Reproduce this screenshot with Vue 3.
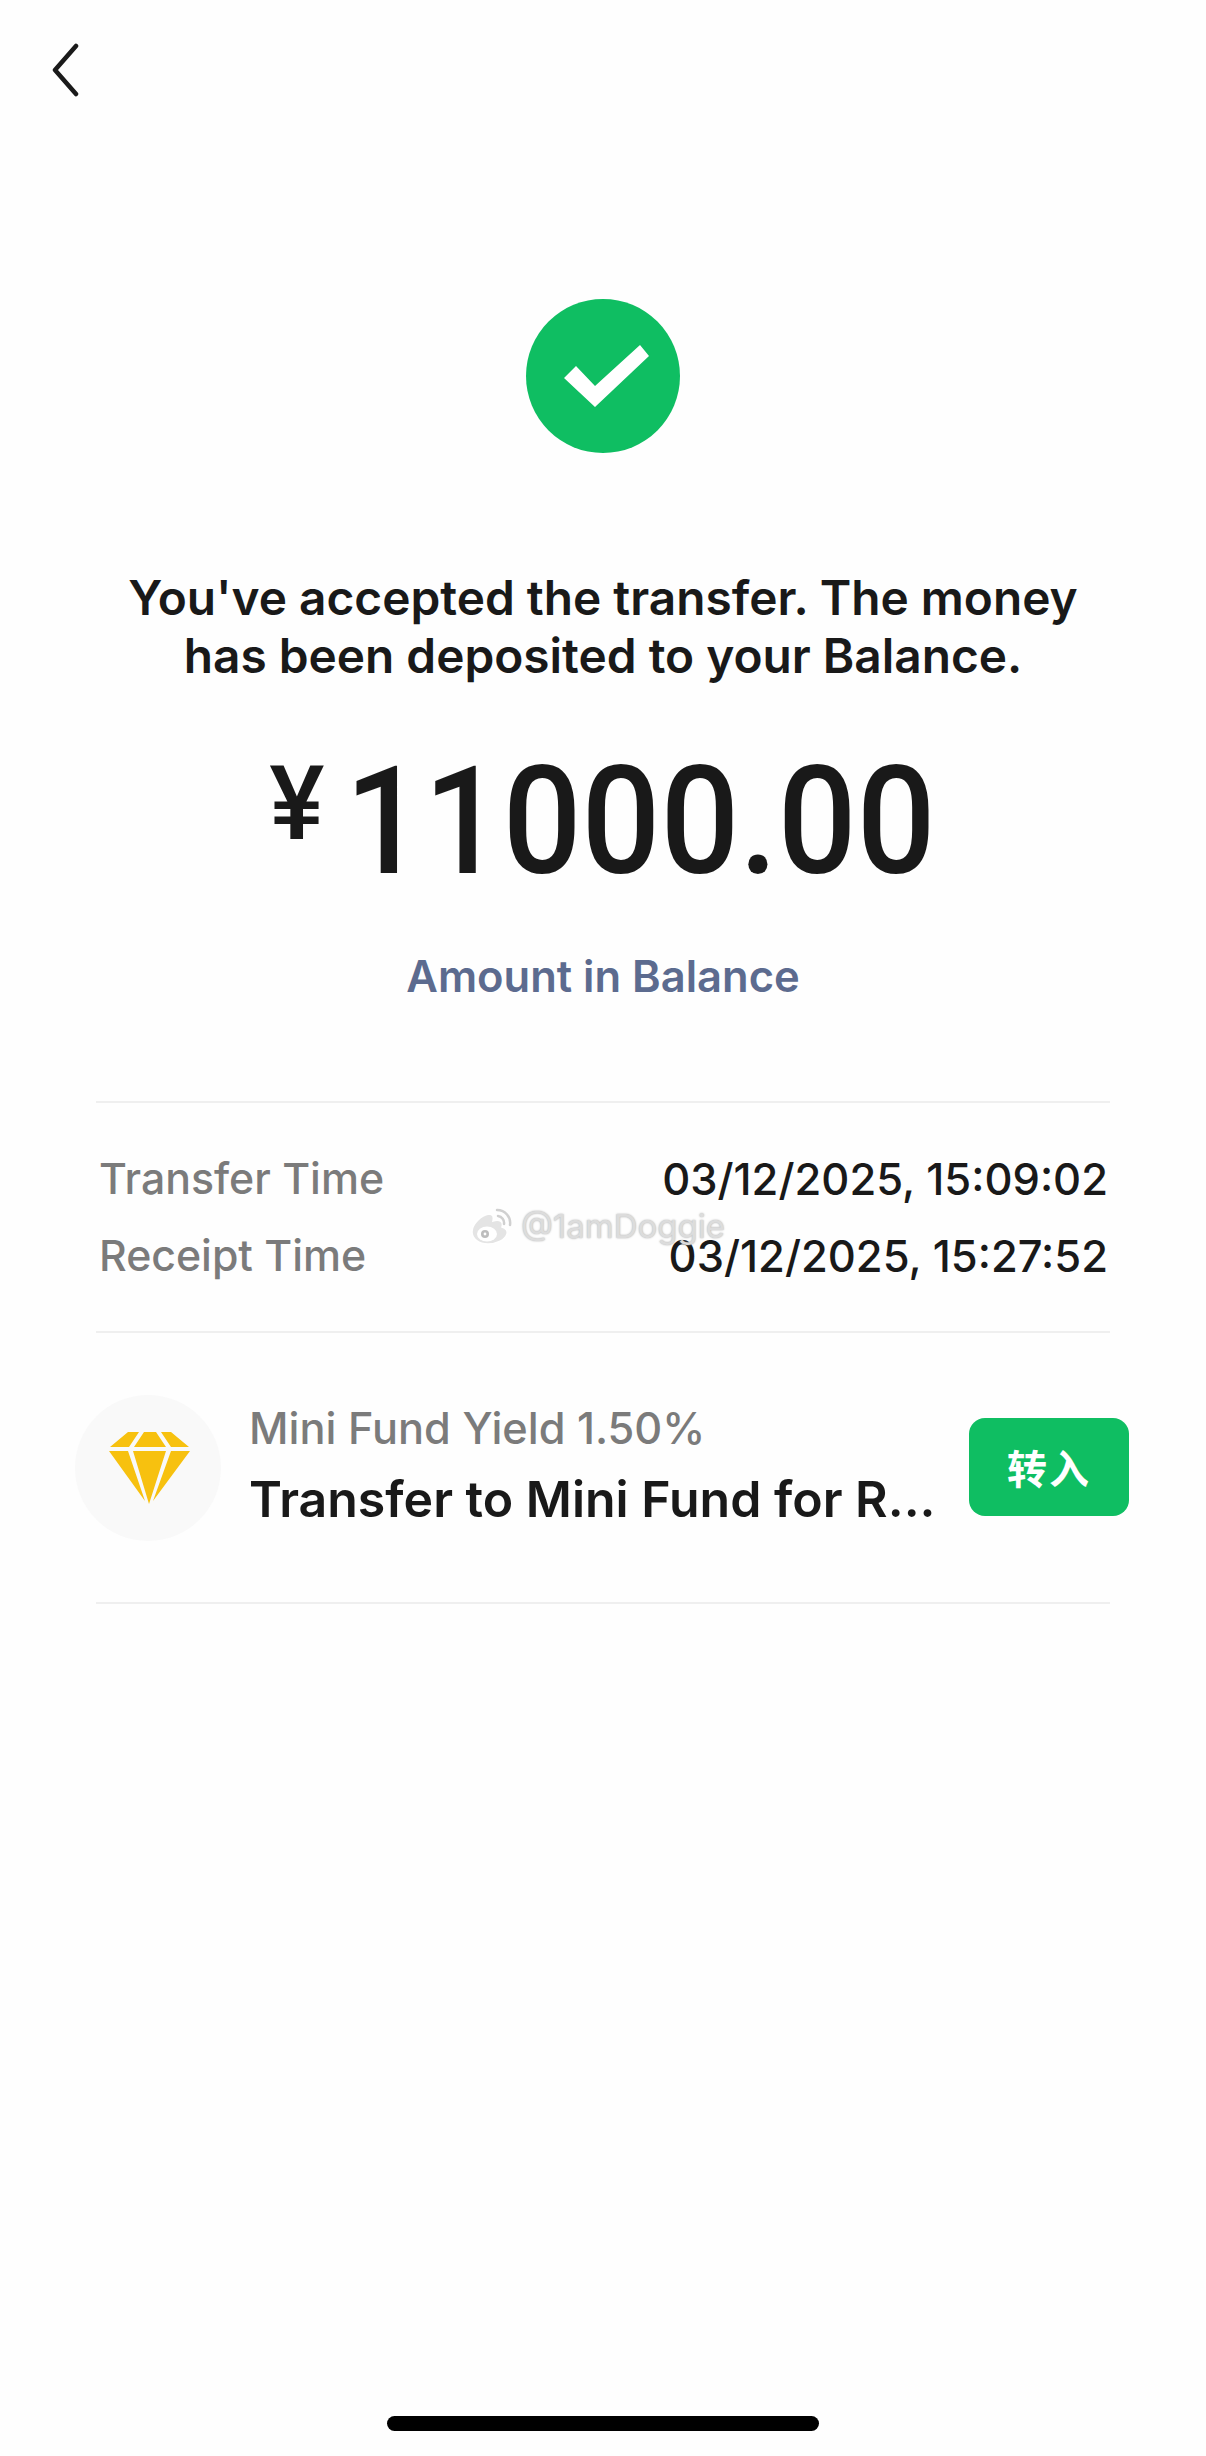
<template>
  <div class="page">
    <header class="nav">
      <svg class="back" viewBox="0 0 32 54" width="32" height="54" aria-label="Back">
        <path d="M27 3 L6 27 L27 51" fill="none" stroke="#1a1a1a" stroke-width="4.5" stroke-linecap="round" stroke-linejoin="round" />
      </svg>
    </header>

    <svg class="ok" viewBox="0 0 154 154" width="154" height="154" aria-label="Success">
      <circle cx="77" cy="77" r="77" fill="#0fbe62" />
      <path d="M38 79 L50 67 L69 87 L114 46 L123 57 L69 108 Z" fill="#fff" />
    </svg>

    <h1 class="title">You've accepted the transfer. The money<br />has been deposited to your Balance.</h1>

    <div class="amount"><span class="yen">¥</span><span class="num">11000.00</span></div>

    <div class="link">Amount in Balance</div>

    <section class="times">
      <div v-for="row in rows" :key="row.label" class="time-row">
        <span class="label">{{ row.label }}</span>
        <span class="value">{{ row.value }}</span>
      </div>
      <div class="mark">
        <svg viewBox="0 0 44 38" width="44" height="38">
          <path d="M3 25C3 17 12 8 20 7c4 0 5 3 4 7 6-2 11 0 9 6 4 1 6 4 5 7-2 6-10 10-19 10C10 37 3 32 3 25Z" fill="#e4e4e4" stroke="#fff" stroke-width="1.5" />
          <ellipse cx="18" cy="27" rx="10" ry="7.5" fill="#fff" />
          <circle cx="16" cy="27" r="4" fill="#bdbdbd" />
          <circle cx="16" cy="27" r="1.4" fill="#fff" />
          <path d="M28 3a13 13 0 0 1 13 15M29 9a7 7 0 0 1 6 8" fill="none" stroke="#d0d0d0" stroke-width="2.5" stroke-linecap="round" />
        </svg>
        <span>@1amDoggie</span>
      </div>
    </section>

    <section class="fund">
      <div class="badge">
        <svg viewBox="0 0 84 74" width="84" height="74">
          <path fill="#f7c10f" d="M21 1H32L22 16H3ZM37 1H49L59 16H27ZM54 1H64L82 16H64ZM2 20H21L38 70ZM26 20H59L42 73ZM64 20H83L46 70Z" />
        </svg>
      </div>
      <div class="fund-text">
        <div class="fund-sub">Mini Fund Yield 1.50%</div>
        <div class="fund-title">Transfer to Mini Fund for R...</div>
      </div>
      <button class="go">转入</button>
    </section>

    <div class="home"></div>
  </div>
</template>

<script setup>
const rows = [
  { label: 'Transfer Time', value: '03/12/2025, 15:09:02' },
  { label: 'Receipt Time', value: '03/12/2025, 15:27:52' },
]
</script>

<style scoped>
.page {
  width: 1206px;
  height: 2456px;
  box-sizing: border-box;
  background: #fefefe;
  display: flex;
  flex-direction: column;
  align-items: center;
  font-family: Inter, "Noto Sans CJK SC", sans-serif;
  color: #191919;
  position: relative;
  overflow: hidden;
}
.nav {
  width: 100%;
  height: 299px;
  flex: none;
  padding: 43px 0 0 49px;
  box-sizing: border-box;
}
.back { display: block; }
.ok { display: block; flex: none; }
.title {
  margin: 116px 0 0;
  font-size: 47.8px;
  line-height: 58px;
  font-weight: 560;
  text-align: center;
  white-space: nowrap;
}
.amount {
  margin-top: 67px;
  height: 140px;
  display: flex;
  align-items: center;
  font-family: Roboto, sans-serif;
  font-weight: 500;
}
.yen { font-size: 104px; margin: -36px 21px 0 0; line-height: 1; }
.num {
  font-size: 150px;
  line-height: 140px;
  transform: scaleX(0.925);
  transform-origin: left center;
  margin-right: -47px;
}
.link {
  margin-top: 58px;
  font-size: 43.5px;
  line-height: 52px;
  font-weight: 600;
  color: #5c6b8f;
}
.times {
  position: relative;
  margin-top: 99px;
  width: 1014px;
  height: 232px;
  box-sizing: border-box;
  border-top: 2px solid #efefef;
  border-bottom: 2px solid #efefef;
  padding: 46px 2px 0 3px;
  display: flex;
  flex-direction: column;
  gap: 17px;
}
.time-row {
  display: flex;
  justify-content: space-between;
  line-height: 60px;
  font-weight: 550;
}
.label { color: #7b7b7b; font-size: 42.8px; }
.value { font-size: 43.5px; }
.mark {
  position: absolute;
  left: 373px;
  top: 103px;
  display: flex;
  align-items: center;
  gap: 8px;
  color: #dcdcdc;
  font-size: 33px;
  text-shadow: 0 0 2px #a8a8a8;
}
.fund {
  width: 1014px;
  height: 271px;
  box-sizing: border-box;
  border-bottom: 2px solid #efefef;
  display: flex;
  align-items: center;
  position: relative;
  padding-left: 153px;
  padding-bottom: 2px;
}
.badge {
  position: absolute;
  left: -21px;
  top: 62px;
  width: 146px;
  height: 146px;
  border-radius: 50%;
  background: #f9f9f9;
  display: flex;
  align-items: center;
  justify-content: center;
  padding-left: 2px;
  box-sizing: border-box;
}
.fund-text { flex: 1; min-width: 0; }
.fund-sub {
  font-size: 43.3px;
  line-height: 50px;
  font-weight: 550;
  color: #7b7b7b;
}
.fund-title {
  margin-top: 15px;
  font-size: 50px;
  line-height: 62px;
  font-weight: 560;
  white-space: nowrap;
}
.go {
  width: 160px;
  height: 98px;
  margin-right: -19px;
  border: 0;
  border-radius: 16px;
  background: #0fbe62;
  color: #fff;
  font-family: "Noto Sans CJK SC", sans-serif;
  font-size: 40px;
  font-weight: 700;
  letter-spacing: 2px;
  flex: none;
}
.home {
  position: absolute;
  left: 387px;
  top: 2416px;
  width: 432px;
  height: 15px;
  border-radius: 8px;
  background: #000;
}
</style>
